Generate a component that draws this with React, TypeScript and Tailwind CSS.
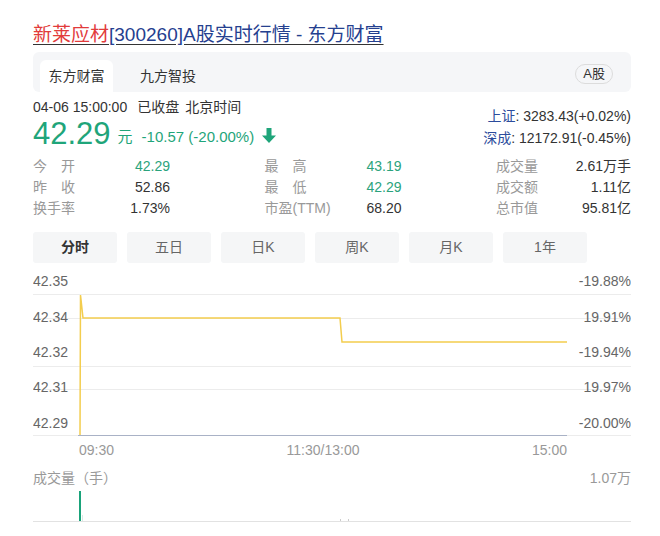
import React from "react";

const font = { fontFamily: '"Liberation Sans", Arial, "Noto Sans CJK SC", sans-serif' };

const stats = [
  [
    ["今　开", "42.29", true],
    ["昨　收", "52.86", false],
    ["换手率", "1.73%", false],
  ],
  [
    ["最　高", "43.19", true],
    ["最　低", "42.29", true],
    ["市盈(TTM)", "68.20", false],
  ],
  [
    ["成交量", "2.61万手", false],
    ["成交额", "1.11亿", false],
    ["总市值", "95.81亿", false],
  ],
] as const;

const periods = ["分时", "五日", "日K", "周K", "月K", "1年"];

function DownArrow() {
  return (
    <svg width="14" height="15" viewBox="0 0 14 15" className="ml-[8px] mt-[2px]">
      <path d="M4.5 0h5v7.5H14L7 15 0 7.5h4.5z" fill="#1fa57a" />
    </svg>
  );
}

function PriceChart() {
  const grid = [25, 49, 97, 120, 166];
  return (
    <svg width="598" height="192" className="block" style={font}>
      {grid.map((y) => (
        <line key={y} x1="0" x2="598" y1={y + 0.5} y2={y + 0.5} stroke="#ececec" />
      ))}
      <line x1="45" x2="534" y1="166.5" y2="166.5" stroke="#a9b2c6" />
      <g fontSize="14" fill="#666">
        <text x="0" y="17">42.35</text>
        <text x="0" y="53">42.34</text>
        <text x="0" y="88">42.32</text>
        <text x="0" y="123">42.31</text>
        <text x="0" y="159">42.29</text>
      </g>
      <g fontSize="14" fill="#666" textAnchor="end">
        <text x="598" y="17">-19.88%</text>
        <text x="598" y="53">19.91%</text>
        <text x="598" y="88">-19.94%</text>
        <text x="598" y="123">19.97%</text>
        <text x="598" y="159">-20.00%</text>
      </g>
      <path
        d="M47 166 L47.5 26 L50 49 L307 49 L309 73 L534 73"
        fill="none"
        stroke="#f3cd4e"
        strokeWidth="1.5"
      />
      <g fontSize="14" fill="#999">
        <text x="46" y="186">09:30</text>
        <text x="290" y="186" textAnchor="middle">11:30/13:00</text>
        <text x="534" y="186" textAnchor="end">15:00</text>
      </g>
    </svg>
  );
}

function VolumeChart() {
  return (
    <svg width="598" height="36" className="block">
      <line x1="0" x2="598" y1="33.5" y2="33.5" stroke="#e2e2e2" />
      <rect x="46" y="3" width="2" height="30" fill="#1aa37a" />
      <rect x="49" y="27" width="1" height="6" fill="#d8ece4" />
      <rect x="307" y="31" width="1" height="2" fill="#ccc" />
      <rect x="315" y="31" width="1" height="2" fill="#ccc" />
    </svg>
  );
}

export default function App() {
  return (
    <div className="min-h-screen bg-white pl-[33px] pr-[29px] pt-[23px] text-[#333]" style={font}>
      <a className="block text-[19px] leading-[24px] underline underline-offset-[3px]" href="#">
        <span className="text-[#e23b3b] decoration-[#e23b3b]">新莱应材</span>
        <span className="text-[#25408f]">[300260]A股实时行情 - 东方财富</span>
      </a>

      <div className="mt-[5px] flex h-[40px] items-end rounded-md bg-[#f5f6f8] pl-[7px] pr-[18px]">
        <div className="flex h-[32px] w-[73px] items-center justify-center rounded-t-md bg-white text-[14px] text-[#333]">
          东方财富
        </div>
        <div className="ml-[18px] flex h-[32px] items-center px-[9px] text-[14px] text-[#333]">九方智投</div>
        <div className="mb-[8px] ml-auto flex h-[20px] items-center rounded-full border border-[#dcdcdc] px-[7px] text-[13px] text-[#333]">
          A股
        </div>
      </div>

      <div className="mt-[6px] flex items-start justify-between">
        <div>
          <div className="h-[18px] text-[14px] leading-[18px]">
            04-06 15:00:00<span className="ml-[10px]">已收盘</span>
            <span className="ml-[6px]">北京时间</span>
          </div>
          <div className="flex h-[36px] items-center text-[#1fa57a]">
            <span className="text-[31px] leading-[36px]">42.29</span>
            <span className="ml-[7px] mt-[6px] text-[15px]">元</span>
            <span className="ml-[9px] mt-[6px] text-[15px]">-10.57 (-20.00%)</span>
            <DownArrow />
          </div>
        </div>
        <div className="pt-[7px] text-right text-[14px]">
          <div className="h-[22px] leading-[22px]">
            <span className="text-[#2c4c9c]">上证</span>: 3283.43(+0.02%)
          </div>
          <div className="h-[22px] leading-[22px]">
            <span className="text-[#2c4c9c]">深成</span>: 12172.91(-0.45%)
          </div>
        </div>
      </div>

      <div className="mt-[4px] flex justify-between text-[14px]">
        {stats.map((col, i) => (
          <div key={i} className={i === 2 ? "w-[135px]" : "w-[137px]"}>
            {col.map(([label, value, green]) => (
              <div key={label} className="flex h-[21px] items-center justify-between">
                <span className="text-[#999]">{label}</span>
                <span className={green ? "text-[#2ba37c]" : "text-[#333]"}>{value}</span>
              </div>
            ))}
          </div>
        ))}
      </div>

      <div className="mt-[13px] flex gap-[10px]">
        {periods.map((p, i) => (
          <div
            key={p}
            className={
              i === 0
                ? "flex h-[31px] w-[84px] items-center justify-center rounded-[3px] bg-[#f5f6f7] text-[14px] font-bold text-[#333]"
                : "flex h-[31px] w-[84px] items-center justify-center rounded-[3px] bg-[#f5f6f7] text-[14px] text-[#666]"
            }
          >
            {p}
          </div>
        ))}
      </div>

      <div className="mt-[6px]">
        <PriceChart />
      </div>

      <div className="mt-[7px] flex h-[20px] items-center justify-between text-[14px] text-[#999]">
        <span>成交量（手）</span>
        <span>1.07万</span>
      </div>
      <VolumeChart />
    </div>
  );
}
